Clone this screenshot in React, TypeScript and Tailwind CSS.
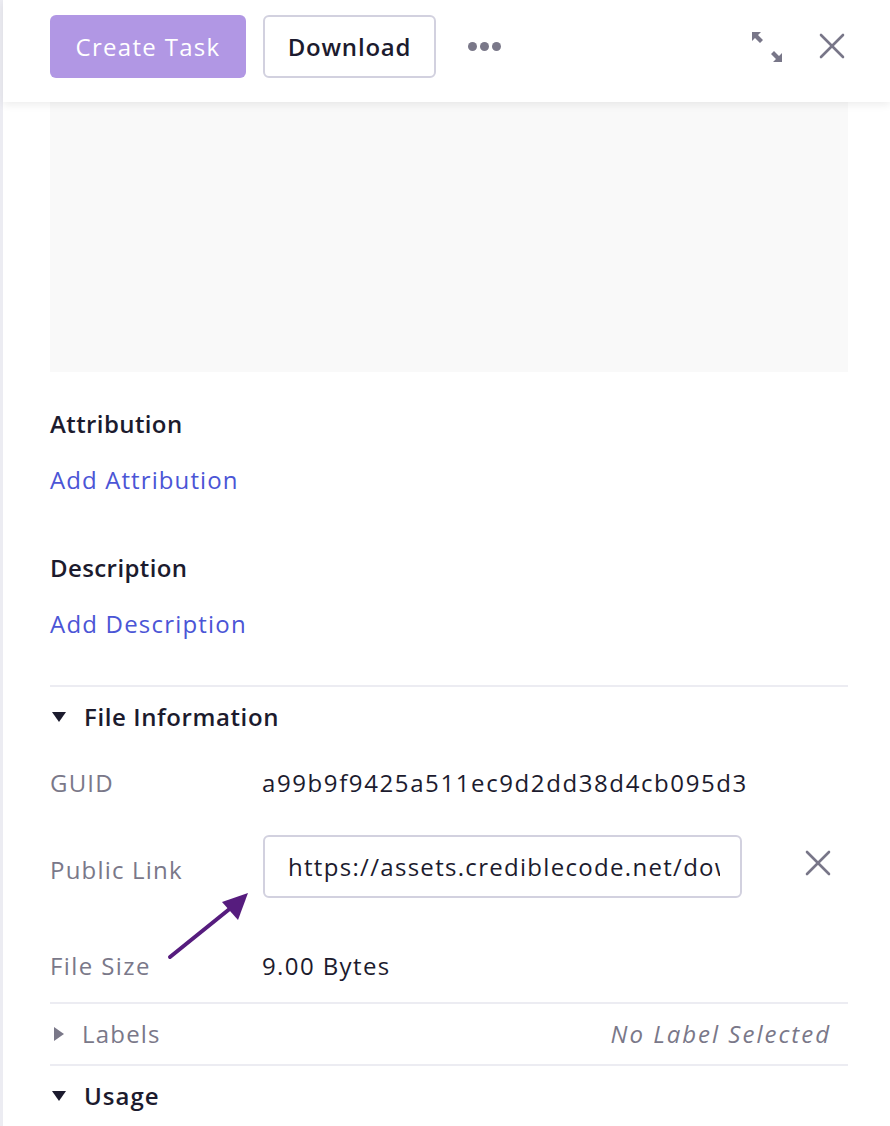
import React from "react";

const font = { fontFamily: "'Open Sans', 'Noto Sans', sans-serif" };

function ExpandIcon() {
  return (
    <svg width="32" height="32" viewBox="0 0 32 32" fill="#787688">
      <path d="M1 1 L10 1 L7 4 L12 9 L9 12 L4 7 L1 10 Z" />
      <path d="M31 31 L22 31 L25 28 L20 23 L23 20 L28 25 L31 22 Z" />
    </svg>
  );
}

function XIcon({ size = 26 }: { size?: number }) {
  return (
    <svg width={size} height={size} viewBox="0 0 26 26" stroke="#787688" strokeWidth="2.6" strokeLinecap="round">
      <line x1="2" y1="2" x2="24" y2="24" />
      <line x1="24" y1="2" x2="2" y2="24" />
    </svg>
  );
}

function Arrow() {
  return (
    <svg width="90" height="75" viewBox="0 0 90 75" className="absolute left-[164px] top-[888px]">
      <line x1="6" y1="69" x2="68" y2="19" stroke="#561c7e" strokeWidth="4" strokeLinecap="round" />
      <polygon points="84,5 58,14 74,32" fill="#561c7e" />
    </svg>
  );
}

export default function App() {
  return (
    <div className="relative w-[890px] h-[1126px] bg-white overflow-hidden flex" style={font}>
      <div className="w-[3px] bg-[#ececf2] shrink-0" />
      <div className="flex-1 flex flex-col">
        <div className="h-[102px] flex items-start pt-[15px] pl-[47px] pr-[45px] bg-white shadow-[0_3px_8px_rgba(0,0,0,0.07)] relative z-10">
          <button className="h-[63px] w-[196px] rounded-[6px] bg-[#b197e4] text-white text-[24px] tracking-[1.3px]">Create Task</button>
          <button className="ml-[17px] h-[63px] w-[173px] rounded-[6px] border-2 border-[#d2d1df] text-[#1c1b2e] text-[24px] font-semibold tracking-[0.8px]">Download</button>
          <div className="ml-[32px] mt-[27px] flex gap-[3px]">
            <span className="w-[9px] h-[9px] rounded-full bg-[#7a7889]" />
            <span className="w-[9px] h-[9px] rounded-full bg-[#7a7889]" />
            <span className="w-[9px] h-[9px] rounded-full bg-[#7a7889]" />
          </div>
          <div className="flex-1" />
          <div className="mt-[16px]"><ExpandIcon /></div>
          <div className="ml-[36px] mt-[18px]"><XIcon /></div>
        </div>
        <div className="px-[47px] pr-[42px] flex flex-col">
          <div className="h-[270px] bg-[#f9f9f9]" />
          <div className="mt-[36px] text-[24px] font-semibold text-[#1c1b2e] leading-[32px] tracking-[0.4px]">Attribution</div>
          <div className="mt-[24px] text-[24px] text-[#4b55d6] leading-[32px] tracking-[1.1px]">Add Attribution</div>
          <div className="mt-[56px] text-[24px] font-semibold text-[#1c1b2e] leading-[32px] tracking-[0.4px]">Description</div>
          <div className="mt-[24px] text-[24px] text-[#4b55d6] leading-[32px] tracking-[1.2px]">Add Description</div>
          <div className="mt-[45px] h-[2px] bg-[#ececf2]" />
          <div className="mt-[14px] flex items-center h-[32px]">
            <svg width="14" height="10" viewBox="0 0 14 10" className="ml-[2px]"><polygon points="0,0 14,0 7,10" fill="#1c1b2e" /></svg>
            <span className="ml-[18px] text-[24px] font-semibold text-[#1c1b2e] tracking-[0.6px]">File Information</span>
          </div>
          <div className="mt-[34px] flex items-center h-[32px] text-[24px]">
            <span className="w-[212px] text-[#7a7889] tracking-[1.2px]">GUID</span>
            <span className="text-[#1c1b2e] tracking-[1.6px]">a99b9f9425a511ec9d2dd38d4cb095d3</span>
          </div>
          <div className="mt-[36px] flex items-center text-[24px]">
            <span className="w-[213px] text-[#7a7889] mt-[6px] tracking-[1.2px]">Public Link</span>
            <input
              readOnly
              value="https://assets.crediblecode.net/download/a99b9f9425a511ec"
              className="w-[479px] h-[63px] border-2 border-[#d2d1df] rounded-[6px] pl-[23px] pr-[20px] text-[#1c1b2e] text-[24px] tracking-[1.3px] outline-none bg-white"
              style={font}
            />
            <div className="ml-[63px] mt-[-8px]"><XIcon size={26} /></div>
          </div>
          <div className="mt-[52px] flex items-center h-[32px] text-[24px]">
            <span className="w-[212px] text-[#7a7889] tracking-[1.4px]">File Size</span>
            <span className="text-[#1c1b2e] tracking-[1.4px]">9.00 Bytes</span>
          </div>
          <div className="mt-[20px] h-[2px] bg-[#ececf2]" />
          <div className="h-[60px] flex items-center text-[24px]">
            <svg width="10" height="14" viewBox="0 0 10 14" className="ml-[4px]"><polygon points="0,0 10,7 0,14" fill="#7a7889" /></svg>
            <span className="ml-[18px] text-[#7a7889] tracking-[1.2px]">Labels</span>
            <span className="flex-1" />
            <span className="italic text-[#7a7889] mr-[17px] tracking-[2px]">No Label Selected</span>
          </div>
          <div className="h-[2px] bg-[#ececf2]" />
          <div className="mt-[14px] flex items-center h-[32px]">
            <svg width="14" height="10" viewBox="0 0 14 10" className="ml-[2px]"><polygon points="0,0 14,0 7,10" fill="#1c1b2e" /></svg>
            <span className="ml-[18px] text-[24px] font-semibold text-[#1c1b2e] tracking-[1px]">Usage</span>
          </div>
        </div>
      </div>
      <Arrow />
    </div>
  );
}
